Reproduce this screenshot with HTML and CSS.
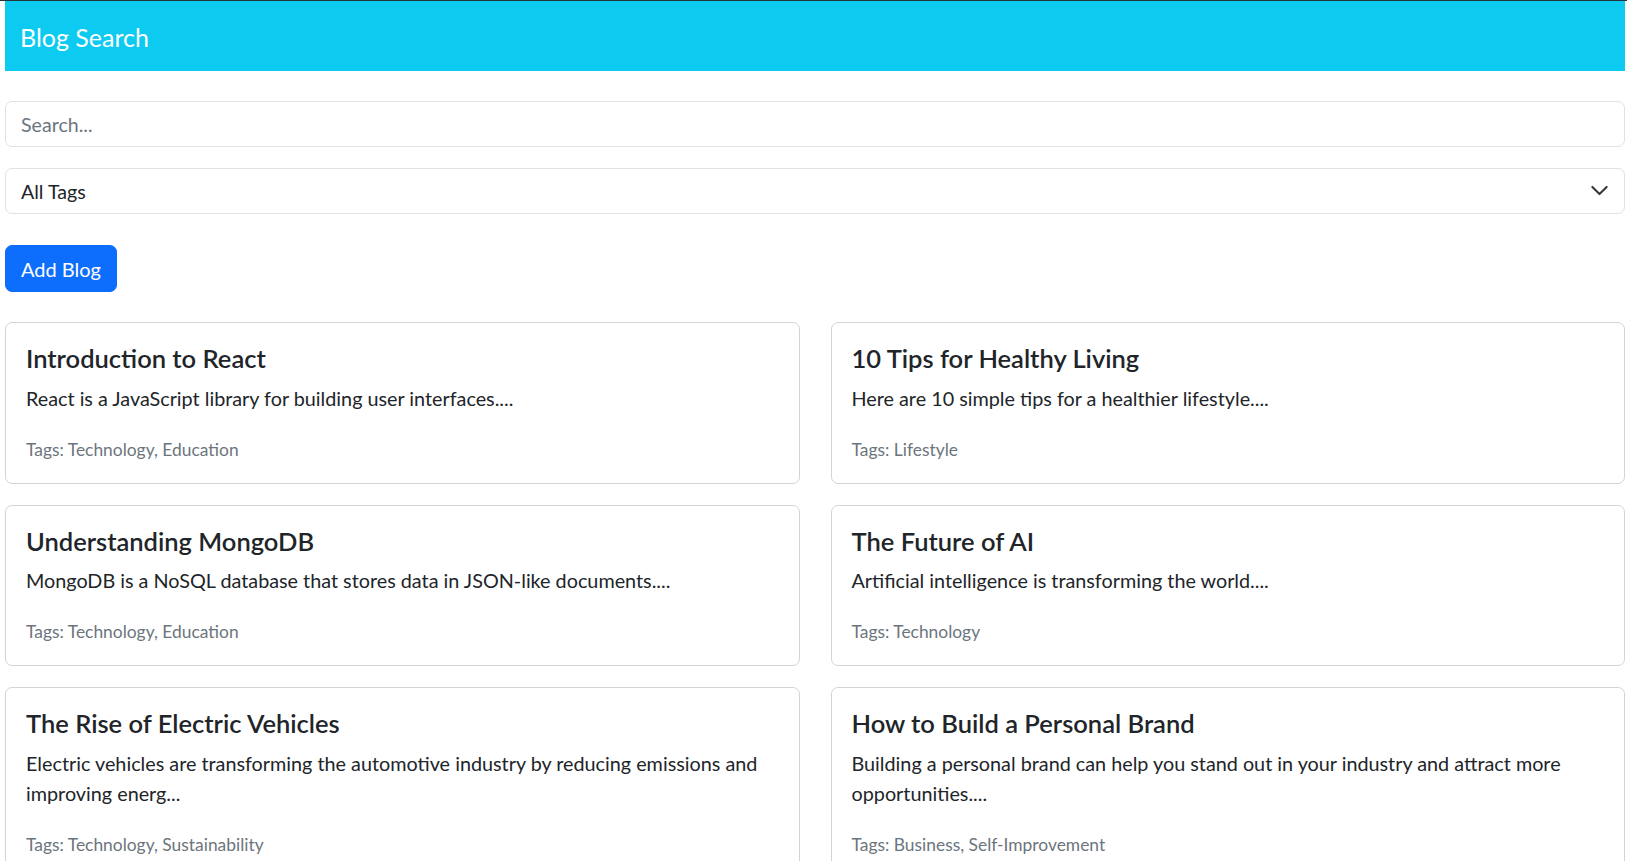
FILE: index.html
```html
<!DOCTYPE html>
<html lang="en">
<head>
<meta charset="utf-8">
<title>Blog Search</title>
<link rel="stylesheet" href="styles.css">
</head>
<body>
<div class="page">
  <header class="navbar">
    <span class="brand">Blog Search</span>
  </header>
  <main class="content">
    <input class="field search" type="text" placeholder="Search...">
    <div class="select-wrap">
      <select class="field select">
        <option>All Tags</option>
        <option>Technology</option>
        <option>Education</option>
        <option>Lifestyle</option>
      </select>
      <svg class="chevron" viewBox="0 0 16 16" width="19" height="19" aria-hidden="true"><path d="M2 5l6 6 6-6" fill="none" stroke="#343a40" stroke-width="1.8" stroke-linecap="round" stroke-linejoin="round"/></svg>
    </div>
    <div class="actions">
      <button class="btn" type="button">Add Blog</button>
    </div>
    <section class="grid">
      <article class="card">
        <h5 class="card-title">Introduction to React</h5>
        <p class="card-text">React is a JavaScript library for building user interfaces....</p>
        <p class="card-tags">Tags: Technology, Education</p>
      </article>
      <article class="card">
        <h5 class="card-title">10 Tips for Healthy Living</h5>
        <p class="card-text">Here are 10 simple tips for a healthier lifestyle....</p>
        <p class="card-tags">Tags: Lifestyle</p>
      </article>
      <article class="card">
        <h5 class="card-title">Understanding MongoDB</h5>
        <p class="card-text">MongoDB is a NoSQL database that stores data in JSON-like documents....</p>
        <p class="card-tags">Tags: Technology, Education</p>
      </article>
      <article class="card">
        <h5 class="card-title">The Future of AI</h5>
        <p class="card-text">Artificial intelligence is transforming the world....</p>
        <p class="card-tags">Tags: Technology</p>
      </article>
      <article class="card">
        <h5 class="card-title">The Rise of Electric Vehicles</h5>
        <p class="card-text">Electric vehicles are transforming the automotive industry by reducing emissions and improving energ...</p>
        <p class="card-tags">Tags: Technology, Sustainability</p>
      </article>
      <article class="card">
        <h5 class="card-title">How to Build a Personal Brand</h5>
        <p class="card-text">Building a personal brand can help you stand out in your industry and attract more opportunities....</p>
        <p class="card-tags">Tags: Business, Self-Improvement</p>
      </article>
    </section>
  </main>
</div>
</body>
</html>
```
FILE: styles.css
```css
html, body {
  margin: 0;
  padding: 0;
  background: #ffffff;
}
body {
  border-top: 1px solid #24343b;
  font-family: "Lato", "Open Sans", sans-serif;
  color: #212529;
  font-size: 19.8px;
  line-height: 1.5;
}
.page {
  margin-left: 5px;
  width: 1620px;
}
.navbar {
  height: 70px;
  background: #0dcaf0;
  display: flex;
  align-items: center;
  padding: 2px 0 0 15px;
  box-sizing: border-box;
}
.brand {
  color: #ffffff;
  font-size: 25px;
  line-height: 1.2;
}
.content {
  display: flex;
  flex-direction: column;
  padding-top: 30px;
}
.field {
  display: block;
  width: 100%;
  height: 46px;
  box-sizing: border-box;
  border: 1px solid #dee2e6;
  border-radius: 7px;
  padding: 0 15px;
  font-family: "Lato", "Open Sans", sans-serif;
  font-size: 19.6px;
  color: #212529;
  background: #ffffff;
  outline: none;
}
.search::placeholder {
  color: #6c757d;
  opacity: 1;
}
.select-wrap {
  position: relative;
  margin-top: 21px;
}
.select {
  appearance: none;
  -webkit-appearance: none;
  padding-right: 50px;
}
.chevron {
  position: absolute;
  right: 16px;
  top: 13px;
  width: 19px;
  height: 19px;
  pointer-events: none;
}
.actions {
  margin-top: 31px;
  display: flex;
}
.btn {
  height: 47px;
  padding: 0 15px;
  border: 1px solid #0d6efd;
  border-radius: 7px;
  background: #0d6efd;
  color: #ffffff;
  font-family: "Lato", "Open Sans", sans-serif;
  font-size: 20px;
}
.grid {
  margin-top: 30px;
  display: grid;
  grid-template-columns: 1fr 1fr;
  column-gap: 31px;
  row-gap: 21px;
}
.card {
  border: 1px solid #d4d4d4;
  border-radius: 7px;
  padding: 20px 16px 20px 20px;
  display: flex;
  flex-direction: column;
  min-height: 0;
}
.card-title {
  margin: 0 0 9px;
  font-size: 25.5px;
  font-weight: 600;
  line-height: 1.2;
  color: #212529;
}
.card-text {
  margin: 0 0 24px;
  font-size: 19.8px;
  line-height: 30px;
}
.card-tags {
  margin: 0;
  font-size: 17.4px;
  line-height: 1.5;
  color: #6c757d;
}
```
